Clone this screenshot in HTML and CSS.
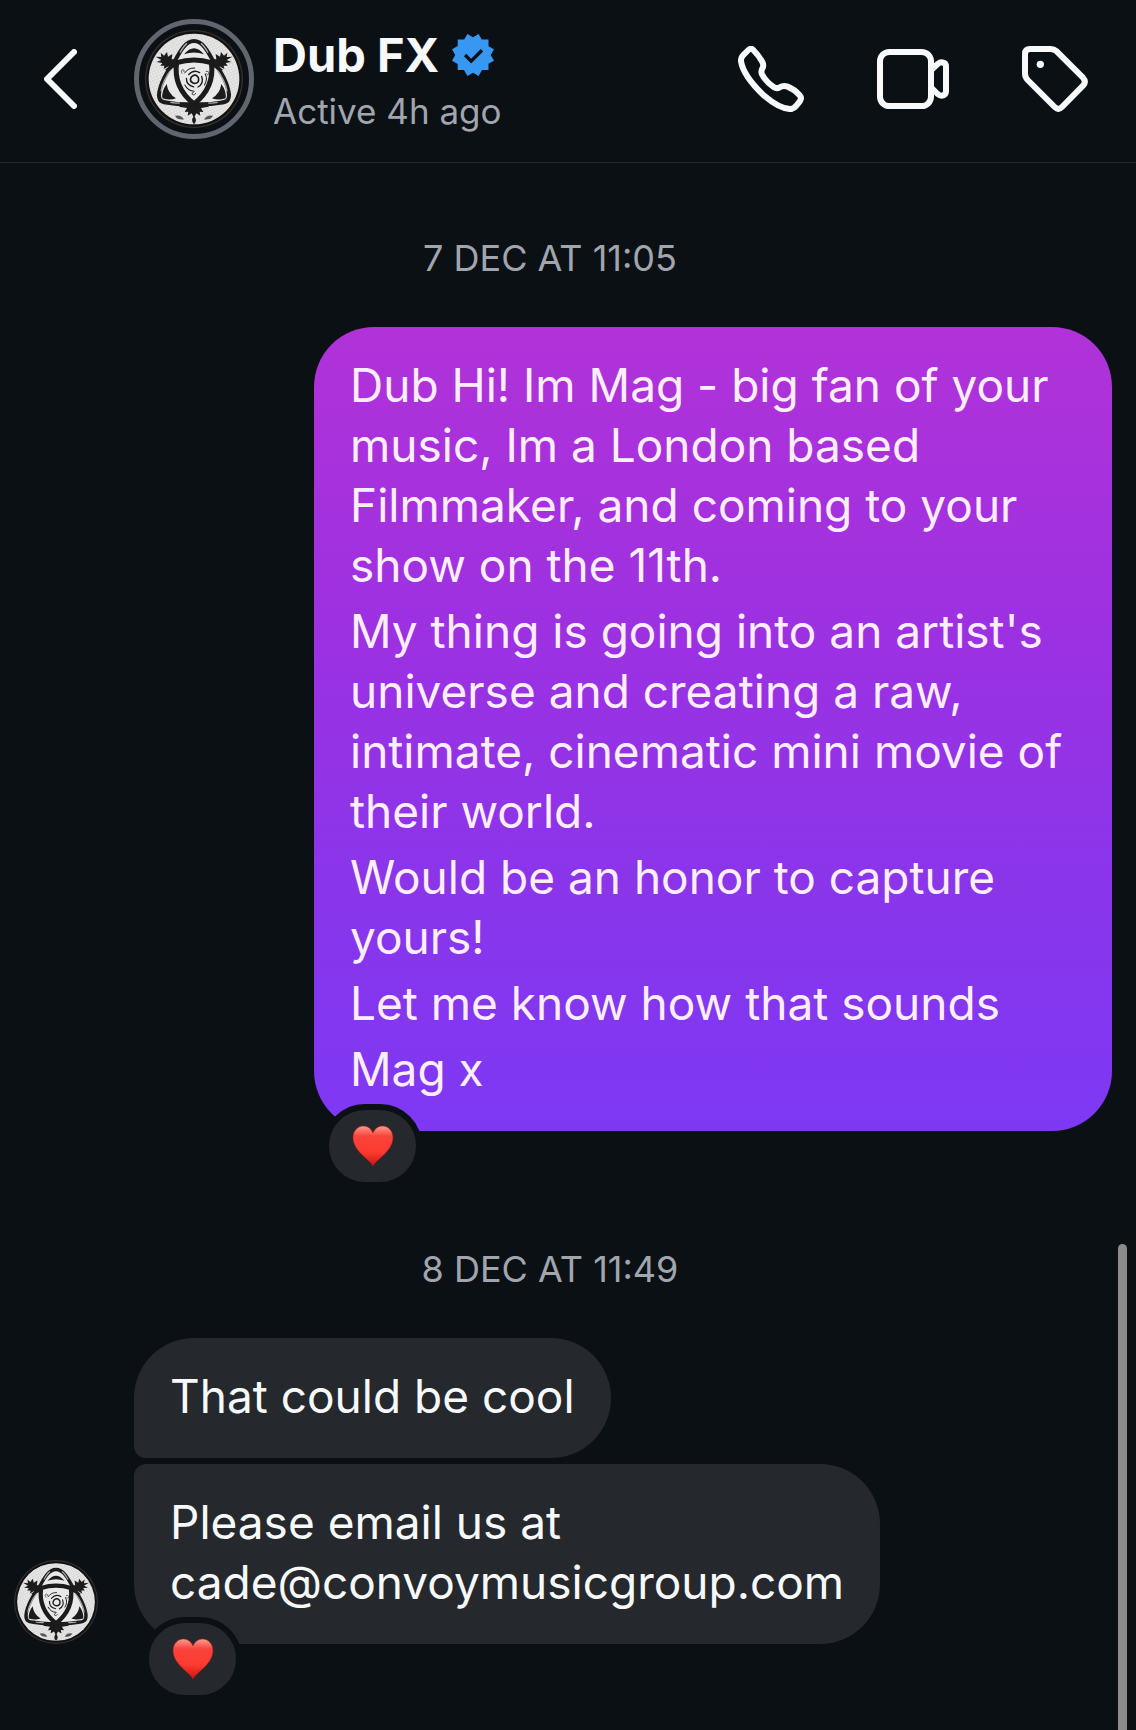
FILE: index.html
```html
<!DOCTYPE html>
<html lang="en">

<head>
    <meta charset="UTF-8">
    <meta name="viewport" content="width=device-width, initial-scale=1.0">
    <title>Dub FX</title>
    <link rel="stylesheet" href="styles.css">
</head>

<body>
    <!-- Shared drawings -->
    <svg class="sprites" aria-hidden="true">
        <defs>
            <pattern id="dots" width="12" height="12" patternUnits="userSpaceOnUse" patternTransform="rotate(20)">
                <circle cx="3" cy="3" r="1.3" fill="#555" />
                <circle cx="9" cy="9" r="1.3" fill="#555" />
            </pattern>
            <linearGradient id="heart-fill" x1="0" y1="0" x2="0" y2="1">
                <stop offset="0" stop-color="#ff9c90" />
                <stop offset="0.25" stop-color="#f8443c" />
                <stop offset="0.65" stop-color="#ff3b30" />
                <stop offset="1" stop-color="#c3160f" />
            </linearGradient>
            <g id="swirl" fill="none" stroke="#1b1b1b" stroke-linecap="round">
                <path d="M141 139q12-9 19 4" stroke-width="5" />
                <path d="M131 134q15-17 33-6" stroke-width="4" />
                <path d="M119 129q10-16 30-15" stroke-width="3" />
                <path d="M111 130q-6-9 3-11q6 1 3 6" stroke-width="2" />
            </g>
        </defs>
        <symbol id="emblem" viewBox="0 0 294 294">
            <circle cx="147" cy="147" r="147" fill="#34322f" />
            <circle cx="147" cy="147" r="143" fill="#111" />
            <circle cx="147" cy="147" r="136" fill="#e9e9e9" />
            <circle cx="147" cy="147" r="136" fill="url(#dots)" />
            <g fill="#1b1b1b">
                <path d="M98 112L72 108 56 117 58 107 46 107 52 99 35 96 49 90 32 80 49 81 47 68 57 77 66 66 69 80 82 72 80 88 104 88Z" />
                <path d="M196 112L222 108 238 117 236 107 248 107 242 99 259 96 245 90 262 80 245 81 247 68 237 77 228 66 225 80 212 72 214 88 190 88Z" />
                <path d="M147 264L140 250 128 257 130 245 119 246 126 234 102 230 120 212H174L192 230 168 234 175 246 164 245 166 257 154 250Z" />
                <path d="M147 283q-12-12 0-25q12 13 0 25z" />
            </g>
            <!-- Outer ribbon, then the side shading -->
            <path d="M147 33C172 33 188 62 205 94C228 122 250 164 252 194C252 213 244 217 226 218Q186 225 147 222Q108 225 68 218C50 217 42 213 42 194C44 164 66 122 89 94C106 62 122 33 147 33Z" fill="#e9e9e9" stroke="#1b1b1b" stroke-width="12" />
            <path d="M80 116C62 140 51 166 48 184M214 116C232 140 243 166 246 184M76 217Q90 220 104 219M218 217Q204 220 190 219M105 68C112 55 119 45 126 40M189 68C182 55 175 45 168 40" fill="none" stroke="#aaa" stroke-width="4" />
            <path d="M64 122Q96 94 147 94T230 122" fill="none" stroke="#1b1b1b" stroke-width="10" />
            <path d="M95 98Q147 82 199 98Q210 172 147 222Q84 172 95 98Z" fill="#e9e9e9" stroke="#1b1b1b" stroke-width="15" stroke-linejoin="round" />
            <g fill="#1b1b1b">
                <path d="M117 73Q147 37 177 73Q147 62 117 73Z" />
                <path d="M65 162Q49 184 52 205Q75 212 93 205Q69 191 65 162Z" />
                <path d="M229 162Q245 184 242 205Q219 212 201 205Q225 191 229 162Z" />
            </g>
            <use href="#swirl" />
            <use href="#swirl" transform="rotate(120 149 148)" />
            <use href="#swirl" transform="rotate(240 149 148)" />
            <path d="M90 257q18-4 27 11q-20 3-27-11zM204 257q-18-4-27 11q20 3 27-11z" fill="#555" />
        </symbol>
        <symbol id="heart" viewBox="0 0 42 42">
            <path d="M21 41C17 34 1 26 1 12.500C1 5.500 6 1 11.500 1C16 1 19.500 4 21 8C22.500 4 26 1 30.500 1C36 1 41 5.500 41 12.500C41 26 25 34 21 41Z" fill="url(#heart-fill)" stroke="#a3170f" stroke-opacity="0.5" />
        </symbol>
    </svg>

    <header class="chat-header">
        <button class="icon-btn back-btn" aria-label="Back">
            <svg width="33" height="60" viewBox="0 0 33 60">
                <path d="M30 3L3 30l27 27" />
            </svg>
        </button>
        <a class="profile" href="#profile">
            <span class="avatar-ring">
                <svg class="avatar-large" aria-hidden="true"><use href="#emblem" /></svg>
            </span>
            <span class="profile-text">
                <span class="profile-name">Dub FX
                    <svg class="verified" width="42" height="42" viewBox="0 0 40 40" role="img" aria-label="Verified">
                        <path fill="#3897f0" fill-rule="evenodd" d="M19.998 3.094 14.638 0l-2.972 5.150H5.432v6.354L0 14.640 3.094 20 0 25.359l5.432 3.137v5.905h5.975L14.638 40l5.360-3.094L25.358 40l3.232-5.600h6.162v-6.010L40 25.359 36.905 20 40 14.641l-5.248-3.030v-6.460h-6.419L25.358 0l-5.360 3.094Zm7.415 11.225 2.254 2.287-11.430 11.500-6.835-6.930 2.244-2.258 4.587 4.581 9.180-9.180Z" />
                    </svg>
                </span>
                <span class="profile-status">Active 4h ago</span>
            </span>
        </a>
        <nav class="actions">
            <button class="icon-btn" aria-label="Audio call">
                <svg width="66" height="66" viewBox="81 138 198 198">
                    <path d="M112 150Q120 143 127 150Q143 166 155 188Q159 197 154 206Q149 214 153 223Q165 246 188 261Q197 267 206 262Q217 255 230 260Q250 268 266 286Q273 294 267 303Q262 310 256 317Q250 325 241 327Q208 329 158 286Q97 228 90 184Q89 173 96 166Z" />
                </svg>
            </button>
            <button class="icon-btn" aria-label="Video call">
                <svg width="72" height="60" viewBox="504 147 216 180">
                    <rect x="513" y="156" width="153" height="162" rx="28" />
                    <path d="M668 209L686 192Q692 187 698 187Q711 188 711 200V274Q711 286 698 287Q692 287 686 282L668 264" />
                </svg>
            </button>
            <button class="icon-btn" aria-label="Labels">
                <svg width="66" height="66" viewBox="936 138 198 198">
                    <path d="M960 147H1022Q1032 147 1040 154L1119 233Q1130 245 1119 257L1056 321Q1045 332 1034 321L953 240Q945 232 945 220V162Q945 147 960 147Z" />
                    <circle class="dot" cx="991" cy="193" r="11" />
                </svg>
            </button>
        </nav>
    </header>

    <main class="chat">
        <time class="date">7 DEC AT 11:05</time>

        <div class="row sent">
            <div class="bubble">
                <p>Dub Hi! Im Mag - big fan of your music, Im a London based Filmmaker, and coming to your show on the 11th.</p>
                <p>My thing is going into an artist's universe and creating a raw, intimate, cinematic mini movie of their world.</p>
                <p>Would be an honor to capture yours!</p>
                <p>Let me know how that sounds</p>
                <p>Mag x</p>
                <button class="reaction" aria-label="Heart reaction">
                    <svg width="42" height="42"><use href="#heart" /></svg>
                </button>
            </div>
        </div>

        <time class="date">8 DEC AT 11:49</time>

        <div class="row received">
            <svg class="avatar-small" aria-hidden="true"><use href="#emblem" /></svg>
            <div class="group">
                <div class="bubble first">
                    <p>That could be cool</p>
                </div>
                <div class="bubble last">
                    <p>Please email us at<br>cade@convoymusicgroup.com</p>
                    <button class="reaction" aria-label="Heart reaction">
                        <svg width="42" height="42"><use href="#heart" /></svg>
                    </button>
                </div>
            </div>
        </div>
    </main>

    <div class="scroll-thumb"></div>
</body>

</html>
```
FILE: styles.css
```css
* {
    box-sizing: border-box;
    margin: 0;
    padding: 0;
}

body {
    position: relative;
    min-height: 100vh;
    background-color: #0b1014;
    color: #f8f9fb;
    font-family: Inter, "Liberation Sans", sans-serif;
    font-size: 46px;
    line-height: 60px;
}

.sprites {
    position: absolute;
    width: 0;
    height: 0;
}

/* Header */
.chat-header {
    display: flex;
    align-items: center;
    height: 163px;
    padding: 0 45px 4px 44px;
    border-bottom: 1px solid #25292e;
}

.icon-btn {
    display: flex;
    align-items: center;
    justify-content: center;
    width: 72px;
    height: 72px;
    background: none;
    border: none;
    cursor: pointer;
}

.icon-btn svg {
    fill: none;
    stroke: #f8f9fb;
    stroke-width: 18;
    stroke-linecap: round;
    stroke-linejoin: round;
}

.icon-btn .dot {
    fill: #f8f9fb;
    stroke: none;
}

.back-btn {
    width: 33px;
}

.back-btn svg {
    stroke-width: 6;
}

.profile {
    display: flex;
    align-items: center;
    gap: 19px;
    margin-left: 57px;
    color: inherit;
    text-decoration: none;
}

.avatar-ring {
    display: flex;
    align-items: center;
    justify-content: center;
    width: 120px;
    height: 120px;
    border: 5px solid #606570;
    border-radius: 50%;
}

.avatar-large {
    width: 98px;
    height: 98px;
}

.profile-text {
    display: flex;
    flex-direction: column;
    padding-top: 3px;
}

.profile-name {
    display: flex;
    align-items: center;
    gap: 13px;
    font-size: 47px;
    font-weight: 700;
}

.profile-status {
    color: #a0a5ae;
    font-size: 35px;
    line-height: 52px;
}

.actions {
    display: flex;
    gap: 70px;
    margin-left: auto;
}

/* Messages */
.chat {
    padding: 74px 24px 80px 14px;
}

.date {
    display: block;
    margin-bottom: 48px;
    padding-right: 26px;
    color: #a0a5ae;
    font-size: 36px;
    line-height: 42px;
    text-align: center;
}

.row {
    display: flex;
}

.sent {
    justify-content: flex-end;
    margin-bottom: 117px;
}

.received {
    align-items: flex-end;
    gap: 36px;
}

.group {
    display: flex;
    flex-direction: column;
    align-items: flex-start;
    gap: 6px;
}

.bubble {
    position: relative;
    max-width: 798px;
    padding: 28px 36px 32px;
    background-color: #25282d;
    border-radius: 60px;
}

.bubble p + p {
    margin-top: 6px;
}

.sent .bubble {
    background: linear-gradient(#b132d8, #9b31e2 40%, #8736ec 75%, #7e38f4);
    color: #fdeeff;
}

.first {
    border-bottom-left-radius: 12px;
}

.last {
    border-top-left-radius: 12px;
}

.avatar-small {
    width: 84px;
    height: 84px;
}

/* Sits over the bottom edge of its bubble */
.reaction {
    position: absolute;
    left: 9px;
    bottom: -57px;
    display: flex;
    align-items: center;
    justify-content: center;
    width: 99px;
    height: 84px;
    background-color: #25282d;
    border: 6px solid #0b1014;
    border-radius: 42px;
    cursor: pointer;
}

.scroll-thumb {
    position: absolute;
    top: 1244px;
    right: 9px;
    bottom: 0;
    width: 9px;
    background-color: #8b8b8c;
    border-radius: 5px 5px 0 0;
}
```
